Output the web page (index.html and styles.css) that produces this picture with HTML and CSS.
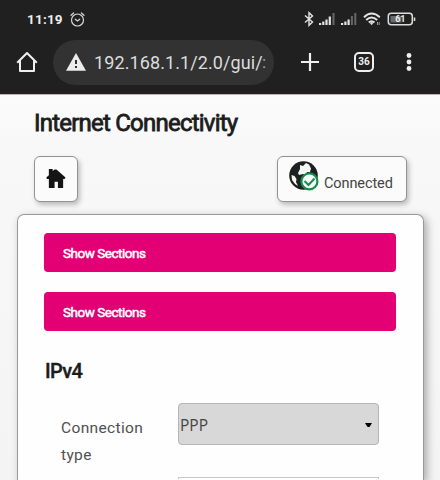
FILE: index.html
```html
<!DOCTYPE html>
<html lang="en">
<head>
<meta charset="utf-8">
<title>Internet Connectivity</title>
<link rel="stylesheet" href="styles.css">
</head>
<body>
<header class="browser">
  <div class="status">
    <span class="clock">11:19</span>
    <svg class="alarm" width="15" height="15" viewBox="0 0 15 15" fill="none" stroke="#d8d8d8" stroke-width="1.2" stroke-linecap="round"><circle cx="7.5" cy="8" r="6"/><path d="M5.3 7.2 7.5 9l2.2-1.8M1 3.3 3.6 1M14 3.300 11.400 1"/></svg>
    <svg class="indicators" width="112" height="16" viewBox="0 0 112 16" fill="none">
      <path d="m1 4.500 7.500 6.500-3.500 3.300V1.700L8.500 5 1 11.500" stroke="#e4e4e4" stroke-width="1.400"/>
      <g fill="#e4e4e4"><path d="M15 12h2.200v2H15zM18.200 10.500h2.200V14h-2.200zM21.400 8.500h2.200V14h-2.200zM24.700 5.500h2.200V14h-2.200z"/><path d="M37 12h2.200v2H37zM40.300 10.500h2.200V14h-2.200zM43.500 8.500h2.200V14h-2.200z"/></g>
      <path fill="#666" d="M28.500 2h2v12h-2zM46.900 5h2v9h-2zM50.300 2h2v12h-2z"/>
      <g stroke="#e4e4e4" stroke-width="1.900"><path d="M60 6.200Q67.500-1 75.800 6.200M62.200 9Q67.500 4 73.200 9M64.800 11.500Q67.500 9 70.500 11.500"/></g>
      <path fill="#ddd" d="m65.800 12 1.800-1 1.800 1-1.800 2.200z"/><path stroke="#bbb" stroke-width=".8" d="M73.500 14v-3M75.200 11v3"/>
      <rect x="84.300" y="2.200" width="24" height="11.500" rx="3" stroke="#ddd" stroke-width="1.500"/><path fill="#6a6a6a" d="M86.500 5h11v6.500h-11z"/><path d="M110.500 6.500v3.500" stroke="#ddd" stroke-width="1.600"/>
      <text x="96.300" y="11.300" class="battery">61</text>
    </svg>
  </div>
  <div class="toolbar">
    <svg class="home" width="22" height="22" viewBox="0 0 22 22" fill="none" stroke="#f0f0f0" stroke-width="2"><path d="M1.200 11.700 11 2l9.800 9.700M4 9.800V20h14V9.800" stroke-linejoin="round"/></svg>
    <div class="address">
      <svg width="20" height="18" viewBox="0 0 20 18"><path fill="#ececec" d="M10 0 20 17.700H0z"/><path stroke="#303030" stroke-width="2" d="M10 7v4M10 13v2"/></svg>
      <span class="url">192.168.1.1/2.0/gui/</span><span class="cut">:</span>
    </div>
    <svg class="plus" width="18" height="18" viewBox="0 0 18 18" stroke="#f0f0f0" stroke-width="2.200"><path d="M9 0v18M0 9h18"/></svg>
    <span class="tabs">36</span>
    <svg class="dots" width="6" height="18" viewBox="0 0 6 18" fill="#f0f0f0"><circle cx="3" cy="2.500" r="2.400"/><circle cx="3" cy="9" r="2.400"/><circle cx="3" cy="15.500" r="2.400"/></svg>
  </div>
</header>
<main>
  <h1>Internet Connectivity</h1>
  <nav>
    <a class="button home-button"><svg width="20" height="20" viewBox="0 0 21 21" fill="#151515"><path d="M3 0h4v2l2-1.500h2L20.500 9l-1 1.500H18V20h-5.500v-6.500H9V20H3v-9.500H1L.3 9 3 6.500z"/></svg></a>
    <a class="button status-button">
      <svg width="30" height="30" viewBox="0 0 30 30"><circle cx="14.500" cy="14.500" r="14.300" fill="#1c2020"/><path fill="#f4f7f4" d="m11 4 3 1 3-3 3 1.500 2 4-1 3.500-3 0-1 3-3-1-4 1-1-2 2-4zM2.500 14l3 1 2 3-.5 3 2 4-3-2-3-4z"/><circle cx="20.400" cy="20.400" r="8" fill="#f8fff9" stroke="#198a50" stroke-width="2.200"/><path d="m15.500 20 4 4 6-6.500" fill="none" stroke="#198a50" stroke-width="2"/></svg>
      <span>Connected</span>
    </a>
  </nav>
  <section class="card">
    <div class="bar">Show Sections</div>
    <div class="bar">Show Sections</div>
    <h2>IPv4</h2>
    <div class="row">
      <label>Connection<br>type</label>
      <div class="fields">
        <div class="select"><span>PPP</span><svg width="7" height="4" viewBox="0 0 7 4"><path d="M0 0h7L4.500 4h-2z"/></svg></div>
        <div class="input"></div>
      </div>
    </div>
  </section>
</main>
</body>
</html>
```
FILE: styles.css
```css
* { box-sizing: border-box; }
html, body { width: 440px; height: 480px; overflow: hidden; }
body { margin: 0; background: #f8f8f8; font-family: Roboto, sans-serif; color: #1c1c1c; }
svg { display: block; flex: none; }
.browser { height: 94px; background: #202020; color: #ededed; box-shadow: 0 1px #bbb3b3; }
.status { display: flex; height: 39px; padding: 11px 0 0 27px; }
.clock { width: 43px; font-size: 13.5px; font-weight: 700; line-height: 17px; letter-spacing: .2px; }
.alarm { margin-top: 1px; }
.indicators { margin: 0 0 0 219px; }
.battery { fill: #eee; font: 700 9px Roboto, sans-serif; text-anchor: middle; }
.toolbar { display: flex; align-items: center; height: 46px; padding-left: 16px; }
.address { display: flex; align-items: center; width: 221px; height: 45px; margin-left: 15px; padding-left: 13px; background: #323232; border-radius: 23px; }
.url { width: 168px; margin-left: 8px; padding-top: 1px; white-space: nowrap; font-size: 18px; line-height: 26px; letter-spacing: .1px; color: #ddd; }
.cut { font-size: 17px; line-height: 26px; color: #aaa; }
.plus { margin-left: 27px; }
.tabs { width: 20px; height: 20px; margin-left: 35px; border: 2px solid #eee; border-radius: 5px; text-align: center; font-size: 10px; line-height: 16px; font-weight: 700; }
.dots { margin-left: 32px; }
main { position: relative; height: 386px; padding-top: 14px; border-top: 1px solid #bbb3b3; background: linear-gradient(#fbfbfb, #f8f8f8 50px, #f4f4f4); }
h1 { margin: -1px 0 0 34px; font-size: 24px; line-height: 30px; font-weight: 400; letter-spacing: -.78px; white-space: nowrap; -webkit-text-stroke: .8px #1c1c1c; }
nav { display: flex; justify-content: space-between; padding: 18px 33px 0 34px; }
.button { display: flex; height: 46px; background: #fbfbfb; border: 1px solid #929292; border-radius: 6px; box-shadow: 2px 3px 5px #bbb; }
.home-button { width: 44px; padding: 12px 0 0 11px; }
.status-button { width: 130px; padding: 4px 0 0 11px; color: #444; font-size: 14.5px; }
.status-button span { margin: 14px 0 0 5px; line-height: 18px; letter-spacing: -.1px; }
.card { width: 407px; height: 266px; margin: 12px 0 0 17px; padding: 18px 27px 0; background: #fefefe; border: 1px solid #999; border-bottom: 0; border-radius: 7px 7px 0 0; box-shadow: 3px 3px 8px #aaa; }
.bar { height: 39px; margin: 0 0 20px -1px; padding-left: 19px; background: #e20074; border-radius: 4px; color: #fff; font-size: 13.5px; font-weight: 400; line-height: 40px; letter-spacing: -.48px; -webkit-text-stroke: .5px #fff; }
h2 { margin: 27px 0 0; font-size: 20px; line-height: 26px; font-weight: 500; letter-spacing: -.7px; -webkit-text-stroke: .4px #1c1c1c; }
.row { display: flex; padding-top: 19px; }
label { width: 133px; padding: 12px 0 0 16px; font-size: 15.5px; line-height: 27px; letter-spacing: .35px; color: #505050; }
.fields { width: 201px; }
.select { display: flex; justify-content: space-between; align-items: center; height: 42px; padding: 1px 6px 0 1px; background: #d8d8d8; border: 1px solid #b5b5b5; border-radius: 4px; font-family: "Open Sans", sans-serif; font-size: 15.5px; color: #454545; }
.input { height: 2px; margin-top: 32px; border: 1px solid #c8c8c8; border-bottom: 0; }
```
